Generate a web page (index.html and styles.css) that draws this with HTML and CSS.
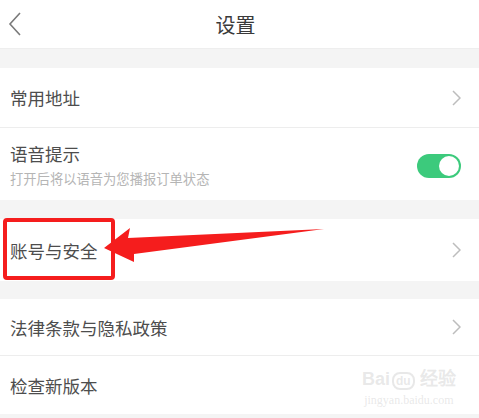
FILE: index.html
```html
<!DOCTYPE html>
<html lang="zh-CN">
<head>
  <meta charset="UTF-8">
  <title>设置</title>
  <link rel="stylesheet" href="styles.css">
</head>
<body>

  <div class="header">
    <svg class="back" width="14" height="24" viewBox="0 0 14 24"><path d="M12 1 L2 12 L12 23" fill="none" stroke="#7a7a7a" stroke-width="1.6"/></svg>
    <h2>设置</h2>
  </div>

  <div class="gap"></div>

  <div class="group">
    <div class="row r1">
      <span class="label">常用地址</span>
      <svg class="arrow" width="9" height="16" viewBox="0 0 9 16"><path d="M1 1 L8 8 L1 15" fill="none" stroke="#bdbdbd" stroke-width="1.5"/></svg>
    </div>
    <div class="row r2">
      <div>
        <div class="label">语音提示</div>
        <div class="sub">打开后将以语音为您播报订单状态</div>
      </div>
      <div class="switch"><span class="knob"></span></div>
    </div>
  </div>

  <div class="gap"></div>

  <div class="group">
    <div class="row r3">
      <span class="label">账号与安全</span>
      <svg class="arrow" width="9" height="16" viewBox="0 0 9 16"><path d="M1 1 L8 8 L1 15" fill="none" stroke="#bdbdbd" stroke-width="1.5"/></svg>
    </div>
  </div>

  <div class="gap small"></div>

  <div class="group">
    <div class="row r4">
      <span class="label">法律条款与隐私政策</span>
      <svg class="arrow" width="9" height="16" viewBox="0 0 9 16"><path d="M1 1 L8 8 L1 15" fill="none" stroke="#bdbdbd" stroke-width="1.5"/></svg>
    </div>
    <div class="row r5">
      <span class="label">检查新版本</span>
    </div>
  </div>

  <!-- annotation drawn over the screenshot -->
  <div class="mark"></div>
  <svg class="pointer" width="479" height="418" viewBox="0 0 479 418">
    <polygon points="104,248 130,228 128,238 324,229 134,254 134,262" fill="#f51d1d"/>
  </svg>

  <div class="watermark">
    <div class="wm-logo">Bai<span class="paw">du</span> 经验</div>
    <div class="wm-url">jingyan.baidu.com</div>
  </div>

</body>
</html>
```

FILE: styles.css
```css
body {
  margin: 0;
  background: #f4f4f4;
  font-family: "Noto Sans CJK SC", "Noto Sans", sans-serif;
  color: #444;
  width: 479px;
  height: 418px;
  overflow: hidden;
  position: relative;
}
.header {
  height: 48px;
  background: #fff;
  display: flex;
  align-items: center;
  justify-content: center;
  position: relative;
  padding-right: 8px;
  border-bottom: 1px solid #eee;
}
.header h2 {
  margin: 0;
  font-size: 20px;
  font-weight: normal;
  color: #3a3a3a;
}
.back {
  position: absolute;
  left: 8px;
  top: 12px;
}
.gap {
  height: 19px;
}
.gap.small {
  height: 18px;
}
.group {
  background: #fff;
}
.row {
  display: flex;
  align-items: center;
  justify-content: space-between;
  padding: 0 18px 0 10px;
  border-bottom: 1px solid #ededed;
}
.row:last-child {
  border-bottom: none;
}
.label {
  font-size: 17.5px;
  color: #4d4d4d;
}
.sub {
  font-size: 13.3px;
  color: #b5b5b5;
  margin-top: 3px;
}
.r1 { height: 59px; }
.r2 { height: 72px; padding-right: 18px; }
.r3 { height: 62px; }
.r4 { height: 56px; }
.r5 { height: 58px; border-bottom: 1px solid #ededed; }
.switch {
  width: 44px;
  height: 24px;
  border-radius: 12px;
  background: #3cca7c;
  position: relative;
  margin-top: 4px;
}
.knob {
  position: absolute;
  right: 2px;
  top: 2px;
  width: 20px;
  height: 20px;
  border-radius: 50%;
  background: #fff;
}
.mark {
  position: absolute;
  left: 3px;
  top: 218px;
  width: 104px;
  height: 54px;
  border: 4px solid #f51d1d;
  border-radius: 4px;
}
.pointer {
  position: absolute;
  left: 0;
  top: 0;
}
.watermark {
  position: absolute;
  left: 362px;
  top: 368px;
  color: rgba(205, 205, 205, 0.45);
  text-align: center;
}
.wm-logo {
  font-family: "Liberation Sans", sans-serif;
  font-size: 18px;
  font-weight: bold;
  line-height: 22px;
}
.paw {
  font-size: 12px;
  border: 2px solid rgba(205, 205, 205, 0.45);
  border-radius: 8px;
  padding: 0 2px;
  margin-left: 2px;
}
.wm-url {
  font-family: "Liberation Serif", serif;
  font-size: 12px;
  line-height: 16px;
}
```
